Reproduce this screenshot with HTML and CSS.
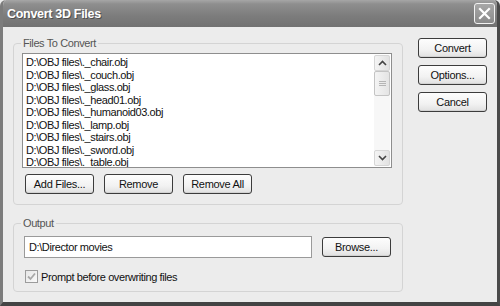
FILE: index.html
```html
<!DOCTYPE html>
<html lang="en">
<head>
  <meta charset="UTF-8">
  <title>Convert 3D Files</title>
  <link rel="stylesheet" href="styles.css">
</head>
<body>
  <div class="window">
    <div class="titlebar">
      <span class="title">Convert 3D Files</span>
      <button class="close-btn" aria-label="Close">
        <svg width="13" height="13" viewBox="0 0 13 13">
          <path d="M2 2 L11 11 M11 2 L2 11" stroke="#fff" stroke-width="2.2" stroke-linecap="square"/>
        </svg>
      </button>
    </div>

    <div class="client">
      <div class="main-col">
        <fieldset class="group group-files">
          <legend>Files To Convert</legend>
          <div class="listbox">
            <ul class="file-list">
              <li>D:\OBJ files\._chair.obj</li>
              <li>D:\OBJ files\._couch.obj</li>
              <li>D:\OBJ files\._glass.obj</li>
              <li>D:\OBJ files\._head01.obj</li>
              <li>D:\OBJ files\._humanoid03.obj</li>
              <li>D:\OBJ files\._lamp.obj</li>
              <li>D:\OBJ files\._stairs.obj</li>
              <li>D:\OBJ files\._sword.obj</li>
              <li>D:\OBJ files\._table.obj</li>
            </ul>
            <div class="scrollbar">
              <div class="sb-btn">
                <svg width="9" height="6" viewBox="0 0 9 6"><path d="M1 5 L4.5 1.5 L8 5" fill="none" stroke="#444" stroke-width="1.6"/></svg>
              </div>
              <div class="sb-thumb">
                <svg width="7" height="7" viewBox="0 0 7 7"><path d="M0 1.5 H7 M0 3.5 H7 M0 5.5 H7" stroke="#b5b5b5" stroke-width="1"/></svg>
              </div>
              <div class="sb-track"></div>
              <div class="sb-btn">
                <svg width="9" height="6" viewBox="0 0 9 6"><path d="M1 1 L4.5 4.5 L8 1" fill="none" stroke="#444" stroke-width="1.6"/></svg>
              </div>
            </div>
          </div>
          <div class="btn-row">
            <button class="btn">Add Files...</button>
            <button class="btn">Remove</button>
            <button class="btn">Remove All</button>
          </div>
        </fieldset>

        <fieldset class="group group-output">
          <legend>Output</legend>
          <div class="output-row">
            <input class="textbox" type="text" value="D:\Director movies">
            <button class="btn">Browse...</button>
          </div>
          <label class="check">
            <span class="checkbox">
              <svg width="9" height="9" viewBox="0 0 9 9"><path d="M1 4.5 L3.5 7 L8 1.5" fill="none" stroke="#a8a8a8" stroke-width="1.8"/></svg>
            </span>
            Prompt before overwriting files
          </label>
        </fieldset>
      </div>

      <div class="side-col">
        <button class="btn">Convert</button>
        <button class="btn">Options...</button>
        <button class="btn">Cancel</button>
      </div>
    </div>
  </div>
</body>
</html>
```

FILE: styles.css
```css
body {
  margin: 0;
  background: #ececec;
  font-family: 'Liberation Sans', Arial, sans-serif;
  font-size: 11px;
  letter-spacing: -0.4px;
  color: #111;
}

.window {
  width: 500px;
  height: 306px;
  box-sizing: border-box;
  display: flex;
  flex-direction: column;
  background: #ececec;
  border-left: 3px solid #7c7c7c;
  border-right: 3px solid #4a4a4a;
  border-bottom: 4px solid #444;
  border-radius: 6px 6px 0 0;
  overflow: hidden;
}

.titlebar {
  height: 27px;
  margin: 0 -3px;
  padding: 0 5px 0 7px;
  display: flex;
  align-items: center;
  justify-content: space-between;
  background: linear-gradient(#a6a6a6 0%, #8e8e8e 15%, #7c7c7c 60%, #727272 100%);
  border-radius: 6px 6px 0 0;
}

.title {
  color: #fff;
  font-weight: bold;
  font-size: 12.5px;
  letter-spacing: -0.3px;
  text-shadow: 1px 1px 0 #4e4e4e;
}

.close-btn {
  width: 21px;
  height: 21px;
  padding: 0;
  display: flex;
  align-items: center;
  justify-content: center;
  background: linear-gradient(#a8a8a8, #8a8a8a);
  border: 1px solid #f2f2f2;
  border-radius: 3px;
}

.client {
  flex: 1;
  display: flex;
  padding: 10px 8px 0 10px;
}

.main-col {
  width: 390px;
  display: flex;
  flex-direction: column;
  gap: 12px;
}

.group {
  margin: 0;
  padding: 4px 10px 0 8px;
  border: 1px solid #d4d4d4;
  border-radius: 4px;
}

.group legend {
  padding: 0 2px;
  margin-left: -1px;
  color: #555;
}

.listbox {
  display: flex;
  height: 113px;
  border: 1px solid #8e8e8e;
  background: #fff;
}

.file-list {
  flex: 1;
  margin: 0;
  padding: 2px 3px;
  list-style: none;
  overflow: hidden;
}

.file-list li {
  line-height: 12.5px;
  white-space: nowrap;
}

.scrollbar {
  width: 16px;
  margin: 1px;
  display: flex;
  flex-direction: column;
  background: #f7f7f7;
}

.sb-btn {
  height: 16px;
  display: flex;
  align-items: center;
  justify-content: center;
  background: linear-gradient(90deg, #f4f4f4, #e2e2e2);
  border: 1px solid #d6d6d6;
  border-radius: 2px;
  box-sizing: border-box;
}

.sb-thumb {
  height: 25px;
  display: flex;
  align-items: center;
  justify-content: center;
  background: linear-gradient(90deg, #f4f4f4, #e4e4e4);
  border: 1px solid #c4c4c4;
  border-radius: 2px;
  box-sizing: border-box;
}

.sb-track {
  flex: 1;
}

.btn-row {
  display: flex;
  gap: 10px;
  padding: 6px 0 10px 3px;
}

.btn {
  width: 69px;
  height: 20px;
  padding: 0;
  font-family: 'Liberation Sans', Arial, sans-serif;
  font-size: 11px;
  letter-spacing: -0.3px;
  color: #111;
  background: linear-gradient(#fdfdfd, #f2f2f2 60%, #e0e0e0);
  border: 1px solid #3c3c3c;
  border-radius: 3px;
  box-shadow: inset 0 -1px 0 #d2d2d2;
}

.group-output {
  height: 66px;
  padding-top: 7px;
}

.output-row {
  display: flex;
  align-items: center;
  gap: 10px;
  padding-left: 2px;
}

.textbox {
  width: 288px;
  height: 22px;
  box-sizing: border-box;
  padding: 0 4px;
  font-family: 'Liberation Sans', Arial, sans-serif;
  font-size: 11px;
  letter-spacing: -0.4px;
  color: #111;
  border: 1px solid #9a9a9a;
  background: #fff;
}

.check {
  display: flex;
  align-items: center;
  gap: 3px;
  margin-top: 12px;
  padding-left: 3px;
}

.checkbox {
  width: 11px;
  height: 11px;
  display: flex;
  align-items: center;
  justify-content: center;
  border: 1px solid #9c9c9c;
  background: linear-gradient(135deg, #e6e6e6, #fafafa);
}

.side-col {
  display: flex;
  flex-direction: column;
  gap: 7px;
  margin-left: 15px;
  padding-top: 1px;
}
```
